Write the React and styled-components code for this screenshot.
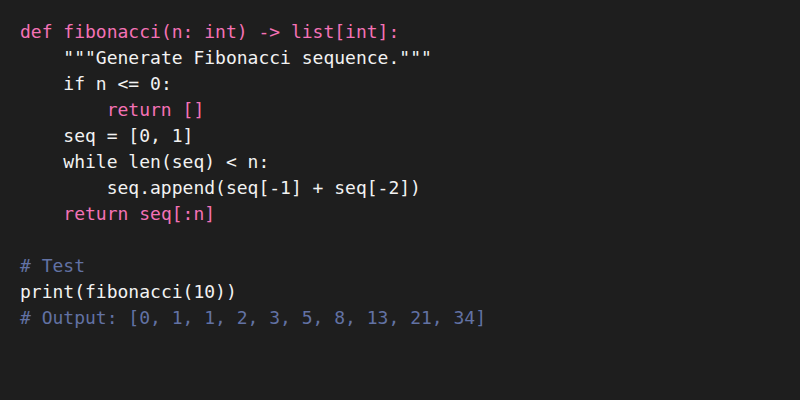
import React from 'react'
import styled, { createGlobalStyle } from 'styled-components'

const GlobalStyle = createGlobalStyle`
  html, body {
    margin: 0;
    padding: 0;
    background: #1e1e1e;
  }
  #root {
    min-height: 100vh;
  }
`

const CodeBlock = styled.pre`
  margin: 0;
  padding: 19px 20px;
  min-height: 400px;
  box-sizing: border-box;
  background: #1e1e1e;
  color: #f2f2f2;
  font-family: "DejaVu Sans Mono", "Liberation Mono", monospace;
  font-size: 18px;
  line-height: 26px;
  display: flex;
  flex-direction: column;
`

const Line = styled.div`
  white-space: pre;
  height: 26px;
  padding-left: ${props => (props.indent || 0) * 4}ch;
`

const colors = {
  keyword: '#f472b6',
  comment: '#6272a4',
  plain: '#f2f2f2'
}

const Token = styled.span`
  color: ${props => colors[props.kind] || colors.plain};
`

const lines = [
  { indent: 0, parts: [['keyword', 'def fibonacci(n: int) -> list[int]:']] },
  { indent: 1, parts: [['plain', '"""Generate Fibonacci sequence."""']] },
  { indent: 1, parts: [['plain', 'if n <= 0:']] },
  { indent: 2, parts: [['keyword', 'return []']] },
  { indent: 1, parts: [['plain', 'seq = [0, 1]']] },
  { indent: 1, parts: [['plain', 'while len(seq) < n:']] },
  { indent: 2, parts: [['plain', 'seq.append(seq[-1] + seq[-2])']] },
  { indent: 1, parts: [['keyword', 'return seq[:n]']] },
  { indent: 0, parts: [] },
  { indent: 0, parts: [['comment', '# Test']] },
  { indent: 0, parts: [['plain', 'print(fibonacci(10))']] },
  { indent: 0, parts: [['comment', '# Output: [0, 1, 1, 2, 3, 5, 8, 13, 21, 34]']] }
]

export default function App () {
  return (
    <>
      <GlobalStyle />
      <CodeBlock>
        {lines.map((line, i) => (
          <Line key={i} indent={line.indent}>
            {line.parts.map(([kind, text], j) => (
              <Token key={j} kind={kind}>{text}</Token>
            ))}
          </Line>
        ))}
      </CodeBlock>
    </>
  )
}
